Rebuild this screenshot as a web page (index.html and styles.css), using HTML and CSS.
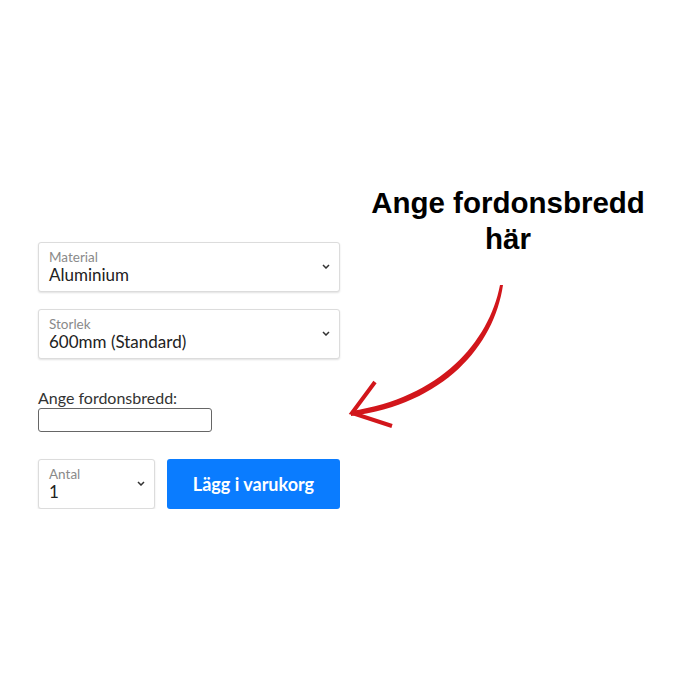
FILE: index.html
```html
<!DOCTYPE html>
<html lang="sv">
<head>
    <meta charset="UTF-8">
    <meta name="viewport" content="width=device-width, initial-scale=1.0">
    <title>Ange fordonsbredd</title>
    <link rel="stylesheet" href="styles.css">
</head>
<body>
    <div class="page">
        <!-- Product form -->
        <div class="form">
            <div class="field">
                <div class="field-text">
                    <span class="field-label">Material</span>
                    <span class="field-value">Aluminium</span>
                </div>
                <svg class="chevron" width="8" height="5" viewBox="0 0 8 5"><path d="M1 1 L4 4 L7 1" fill="none" stroke="#333" stroke-width="1.5"/></svg>
            </div>

            <div class="field">
                <div class="field-text">
                    <span class="field-label">Storlek</span>
                    <span class="field-value">600mm (Standard)</span>
                </div>
                <svg class="chevron" width="8" height="5" viewBox="0 0 8 5"><path d="M1 1 L4 4 L7 1" fill="none" stroke="#333" stroke-width="1.5"/></svg>
            </div>

            <label class="width-label" for="width">Ange fordonsbredd:</label>
            <input class="width-input" id="width" type="text">

            <div class="buy-row">
                <div class="field qty">
                    <div class="field-text">
                        <span class="field-label">Antal</span>
                        <span class="field-value">1</span>
                    </div>
                    <svg class="chevron" width="8" height="5" viewBox="0 0 8 5"><path d="M1 1 L4 4 L7 1" fill="none" stroke="#333" stroke-width="1.5"/></svg>
                </div>
                <button class="buy-btn">Lägg i varukorg</button>
            </div>
        </div>

        <!-- Callout with arrow -->
        <div class="callout">
            <h2>Ange fordonsbredd<br>här</h2>
            <svg class="arrow" width="180" height="180" viewBox="0 0 180 180">
                <path d="M160 25 C149 82 100 138 11 151 L11 156 C104 144 154 86 163 25 Z" fill="#d2161b"/>
                <path d="M35 122 L12 153 L52 166" fill="none" stroke="#d2161b" stroke-width="4" stroke-linecap="butt" stroke-linejoin="miter"/>
            </svg>
        </div>
    </div>
</body>
</html>
```

FILE: styles.css
```css
/* Page reset */
body {
    margin: 0;
    background: #fff;
    font-family: Lato, "Open Sans", sans-serif;
    color: #222;
}

.page {
    display: flex;
    align-items: flex-start;
    padding: 185px 0 0 38px;
}

/* Left column: the product form */
.form {
    width: 302px;
    padding-top: 57px;
    display: flex;
    flex-direction: column;
}

.field {
    display: flex;
    align-items: center;
    box-sizing: border-box;
    height: 50px;
    padding: 7px 9px 6px 10px;
    border: 1px solid #dcdcdc;
    border-radius: 3px;
    box-shadow: 0 1px 2px rgba(0, 0, 0, 0.12);
    background: #fff;
}

.field + .field {
    margin-top: 17px;
}

.field-text {
    flex: 1;
    display: flex;
    flex-direction: column;
}

.field-label {
    font-size: 13.5px;
    line-height: 15px;
    color: #8a8a8a;
}

.field-value {
    font-size: 17px;
    line-height: 20px;
    color: #222;
}

.chevron {
    margin-top: -3px;
}

.width-label {
    margin-top: 29px;
    font-size: 16px;
    line-height: 19px;
    color: #333;
}

.width-input {
    box-sizing: border-box;
    width: 174px;
    height: 24px;
    margin: 1px 0 0;
    border: 1px solid #666;
    border-radius: 3px;
}

.buy-row {
    display: flex;
    gap: 12px;
    margin-top: 27px;
}

.qty {
    width: 117px;
}

.buy-btn {
    flex: 1;
    height: 50px;
    border: none;
    border-radius: 3px;
    background: #0a7cff;
    color: #fff;
    font-family: Lato, sans-serif;
    font-weight: bold;
    font-size: 18px;
}

/* Right column: callout heading and arrow */
.callout {
    width: 336px;
    display: flex;
    flex-direction: column;
}

.callout h2 {
    margin: 0;
    text-align: center;
    font-family: "Liberation Sans", Arial, sans-serif;
    font-weight: bold;
    font-size: 29.5px;
    line-height: 36px;
    color: #000;
}

.arrow {
    display: block;
    margin-top: 3px;
}
```
